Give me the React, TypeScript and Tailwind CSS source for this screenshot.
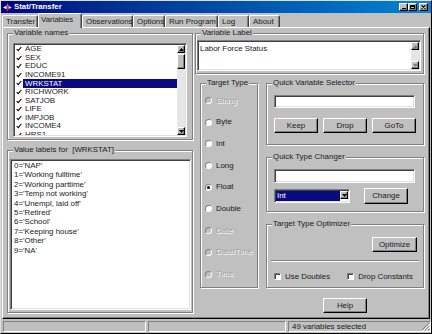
import React from "react";

const raised =
  "border border-white border-r-black border-b-black shadow-[inset_-1px_-1px_0_#808080]";
const sunken =
  "border border-[#808080] border-r-white border-b-white shadow-[inset_1px_1px_0_#404040,inset_-1px_-1px_0_#dfdfdf]";

function Group({
  label,
  className = "",
  children,
}: {
  label: string;
  className?: string;
  children?: React.ReactNode;
}) {
  return (
    <div
      className={`relative border border-[#808080] shadow-[inset_1px_1px_0_#fff,1px_1px_0_#fff] flex flex-col ${className}`}
    >
      <span className="absolute left-[5px] top-[-6px] bg-[#c0c0c0] px-[1px] leading-[10px] whitespace-pre">
        {label}
      </span>
      {children}
    </div>
  );
}

function Btn({ children, className = "" }: { children: React.ReactNode; className?: string }) {
  return (
    <div className={`${raised} bg-[#c0c0c0] flex items-center justify-center ${className}`}>
      {children}
    </div>
  );
}

function Tri({ up, color = "#000" }: { up?: boolean; color?: string }) {
  return (
    <svg width="5" height="3" viewBox="0 0 5 3">
      <polygon points={up ? "2.5,0 5,3 0,3" : "0,0 5,0 2.5,3"} fill={color} />
    </svg>
  );
}

function ScrollBtn({ up, disabled }: { up?: boolean; disabled?: boolean }) {
  return (
    <div className={`${raised} bg-[#c0c0c0] w-[8px] h-[8px] flex items-center justify-center shrink-0`}>
      <Tri up={up} color={disabled ? "#808080" : "#000"} />
    </div>
  );
}

function Radio({ label, disabled, checked }: { label: string; disabled?: boolean; checked?: boolean }) {
  return (
    <div className="flex items-center h-[8px]">
      <div
        className={`w-[7px] h-[7px] rounded-full border border-[#808080] border-r-white border-b-white flex items-center justify-center ${
          disabled ? "bg-[#c0c0c0]" : "bg-white"
        }`}
      >
        {checked && <div className="w-[3px] h-[3px] rounded-full bg-black" />}
      </div>
      <span
        className={`ml-[4px] ${disabled ? "text-[#a0a0a0] [text-shadow:1px_1px_0_#fff]" : ""}`}
      >
        {label}
      </span>
    </div>
  );
}

function CheckBox({ label, className = "" }: { label: string; className?: string }) {
  return (
    <div className={`flex items-center whitespace-nowrap ${className}`}>
      <div className="w-[7px] h-[7px] shrink-0 bg-white border border-[#808080] border-r-white border-b-white shadow-[inset_1px_1px_0_#404040]" />
      <span className="ml-[4px]">{label}</span>
    </div>
  );
}

function Tick() {
  return (
    <svg width="6" height="6" viewBox="0 0 6 6">
      <path d="M0.7 3 L2.2 4.7 L5.3 1" fill="none" stroke="#000" strokeWidth="1.1" />
    </svg>
  );
}

const vars = ["AGE", "SEX", "EDUC", "INCOME91", "WRKSTAT", "RICHWORK", "SATJOB", "LIFE", "IMPJOB", "INCOME4", "HRS1"];
const valueLabels = [
  "0='NAP'",
  "1='Working fulltime'",
  "2='Working parttime'",
  "3='Temp not working'",
  "4='Unempl, laid off'",
  "5='Retired'",
  "6='School'",
  "7='Keeping house'",
  "8='Other'",
  "9='NA'",
];

const tabs = [
  { t: "Transfer", w: 36 },
  { t: "Variables", w: 44, sel: true },
  { t: "Observations", w: 51 },
  { t: "Options", w: 32 },
  { t: "Run Program", w: 53 },
  { t: "Log", w: 31 },
  { t: "About", w: 31 },
];

export default function App() {
  return (
    <div className="w-[432px] h-[334px] bg-[#c0c0c0] flex flex-col border border-[#dfdfdf] border-r-black border-b-black text-[7.9px] leading-none text-[#1a1a1a] overflow-hidden whitespace-nowrap font-['Liberation_Sans',Arial,sans-serif]">
      {/* Title bar */}
      <div className="h-[12px] shrink-0 flex items-center bg-linear-to-r from-[#000080] to-[#1084d0] pl-[2px] pr-[3px]">
        <svg width="9" height="9" viewBox="0 0 9 9">
          <polygon points="4.5,0 6,3 4.5,4.5 3,3" fill="#e0407a" />
          <polygon points="9,4.5 6,6 4.5,4.5 6,3" fill="#f7b0c8" />
          <polygon points="4.5,9 3,6 4.5,4.5 6,6" fill="#b02050" />
          <polygon points="0,4.5 3,3 4.5,4.5 3,6" fill="#ffffff" />
          <circle cx="4.5" cy="4.5" r="1" fill="#6030a0" />
        </svg>
        <span className="ml-[2px] text-white font-bold text-[7.8px]">Stat/Transfer</span>
        <div className="ml-auto flex items-center">
          <Btn className="w-[9px] h-[8px] items-end pb-[1px]">
            <div className="w-[4px] h-[1.5px] bg-black" />
          </Btn>
          <Btn className="w-[9px] h-[8px]">
            <div className="w-[5px] h-[4px] border border-black border-t-2" />
          </Btn>
          <Btn className="w-[9px] h-[8px] ml-[2px]">
            <svg width="5" height="4" viewBox="0 0 5 4">
              <path d="M0.5 0.3 L4.5 3.7 M4.5 0.3 L0.5 3.7" stroke="#000" strokeWidth="1.1" />
            </svg>
          </Btn>
        </div>
      </div>

      {/* Tabs */}
      <div className="h-[14px] shrink-0 flex items-end pl-[1px] relative z-10">
        {tabs.map((tab) => (
          <div
            key={tab.t}
            style={{ width: tab.w }}
            className={`flex items-center overflow-hidden border-t border-l border-white border-r border-r-[#404040] rounded-t-[2px] shadow-[inset_-1px_0_0_#808080] ${
              tab.sel ? "h-[15px] -mb-[1px] bg-[#c0c0c0] pl-[2px] pb-[2px]" : "h-[12px] pt-[1px] pl-[3px]"
            }`}
          >
            {tab.t}
          </div>
        ))}
      </div>

      {/* Tab panel */}
      <div className="h-[292px] w-[428px] ml-[1px] shrink-0 flex border border-white border-r-black border-b-black shadow-[inset_-1px_-1px_0_#808080] pl-[4px] pt-[5px]">
        {/* Left column */}
        <div className="w-[186px] flex flex-col">
          <Group label="Variable names" className="h-[107px]">
            <div className={`${sunken} bg-white ml-[5px] mt-[9px] w-[174px] h-[94px] p-[1px] flex`}>
              <div className="flex-1 flex flex-col overflow-hidden">
                {vars.map((v) => (
                  <div key={v} className="h-[8.55px] shrink-0 flex items-center">
                    <div className="w-[8px] pl-[1px] flex items-center">
                      <Tick />
                    </div>
                    <div
                      className={`flex-1 h-full flex items-center pl-[2px] ${
                        v === "WRKSTAT" ? "bg-[#0a0a80] text-white" : ""
                      }`}
                    >
                      {v}
                    </div>
                  </div>
                ))}
              </div>
              <div className="w-[8px] flex flex-col bg-[#e6e6e6]">
                <ScrollBtn up />
                <div className={`${raised} bg-[#c0c0c0] w-[8px] h-[15px] mt-[1px]`} />
                <div className="flex-1" />
                <ScrollBtn />
              </div>
            </div>
          </Group>
          <Group label="Value labels for  [WRKSTAT]" className="h-[163px] mt-[10px]">
            <div className={`${sunken} bg-white ml-[2px] mt-[8px] w-[181px] h-[151px] pl-[3px] pt-[1px] leading-[9.4px] whitespace-pre`}>
              {valueLabels.map((l) => (
                <div key={l}>{l}</div>
              ))}
            </div>
          </Group>
        </div>

        {/* Right column */}
        <div className="w-[229px] ml-[2px] flex flex-col">
          <Group label="Variable Label" className="h-[41px]">
            <div className={`${sunken} bg-white ml-[1px] mt-[6px] w-[224px] h-[31px] p-[1px] flex`}>
              <div className="flex-1 pl-[1px] pt-[3px]">Labor Force Status</div>
              <div className="w-[8px] flex flex-col bg-[#e6e6e6]">
                <ScrollBtn up disabled />
                <div className="flex-1" />
                <ScrollBtn disabled />
              </div>
            </div>
          </Group>

          <div className="flex mt-[9px]">
            <Group label="Target Type" className="w-[58px] h-[205px] ml-[5px]">
              <div className="flex flex-col pl-[4px] pt-[12.5px] gap-[13.7px]">
                <Radio label="String" disabled />
                <Radio label="Byte" />
                <Radio label="Int" />
                <Radio label="Long" />
                <Radio label="Float" checked />
                <Radio label="Double" />
                <Radio label="Date" disabled />
                <Radio label="Date/Time" disabled />
                <Radio label="Time" disabled />
              </div>
            </Group>

            <div className="w-[158px] ml-[8px] flex flex-col">
              <Group label="Quick Variable Selector" className="h-[62px]">
                <div className={`${sunken} bg-white ml-[7px] mt-[11px] w-[141px] h-[13px]`} />
                <div className="flex ml-[7px] mt-[10px] gap-[5px]">
                  <Btn className="w-[44px] h-[15px]">Keep</Btn>
                  <Btn className="w-[44px] h-[15px]">Drop</Btn>
                  <Btn className="w-[44px] h-[15px]">GoTo</Btn>
                </div>
              </Group>

              <Group label="Quick Type Changer" className="h-[55px] mt-[12px]">
                <div className={`${sunken} bg-white ml-[7px] mt-[11px] w-[141px] h-[14px]`} />
                <div className="flex items-start ml-[7px] mt-[5px]">
                  <div className={`${sunken} bg-white w-[76px] h-[14px] mt-[1px] p-[1px] flex`}>
                    <div className="flex-1 bg-[#0a0a80] text-white flex items-center pl-[1px]">Int</div>
                    <ScrollBtn />
                  </div>
                  <Btn className="w-[44px] h-[16px] ml-[14px]">Change</Btn>
                </div>
              </Group>

              <Group label="Target Type Optimizer" className="h-[64px] mt-[12px]">
                <Btn className="w-[45px] h-[15px] self-end mr-[6px] mt-[12px]">Optimize</Btn>
                <div className="mx-[4px] mt-[8px] h-[2px] border-t border-[#808080] border-b border-b-white" />
                <div className="flex mt-[11px]">
                  <CheckBox label="Use Doubles" className="ml-[7px]" />
                  <CheckBox label="Drop Constants" className="ml-[17px]" />
                </div>
              </Group>

              <Btn className="w-[44px] h-[15px] self-center mt-[10px]">Help</Btn>
            </div>
          </div>
        </div>
      </div>

      {/* Status bar */}
      <div className="h-[13px] shrink-0 mt-[1px] flex pl-[2px] pt-[1px] pb-[1px]">
        <div className="w-[143px] border border-[#808080] border-r-white border-b-white" />
        <div className="w-[138px] ml-[2px] border border-[#808080] border-r-white border-b-white" />
        <div className="flex-1 ml-[2px] border border-[#808080] border-r-white border-b-white flex items-center pl-[3px] relative">
          49 variables selected
          <svg className="absolute right-0 bottom-0" width="10" height="10" viewBox="0 0 10 10">
            <path d="M9 2 L2 9 M9 5 L5 9 M9 8 L8 9" stroke="#808080" strokeWidth="1" />
            <path d="M10 3 L3 10 M10 6 L6 10" stroke="#fff" strokeWidth="1" />
          </svg>
        </div>
      </div>
    </div>
  );
}
